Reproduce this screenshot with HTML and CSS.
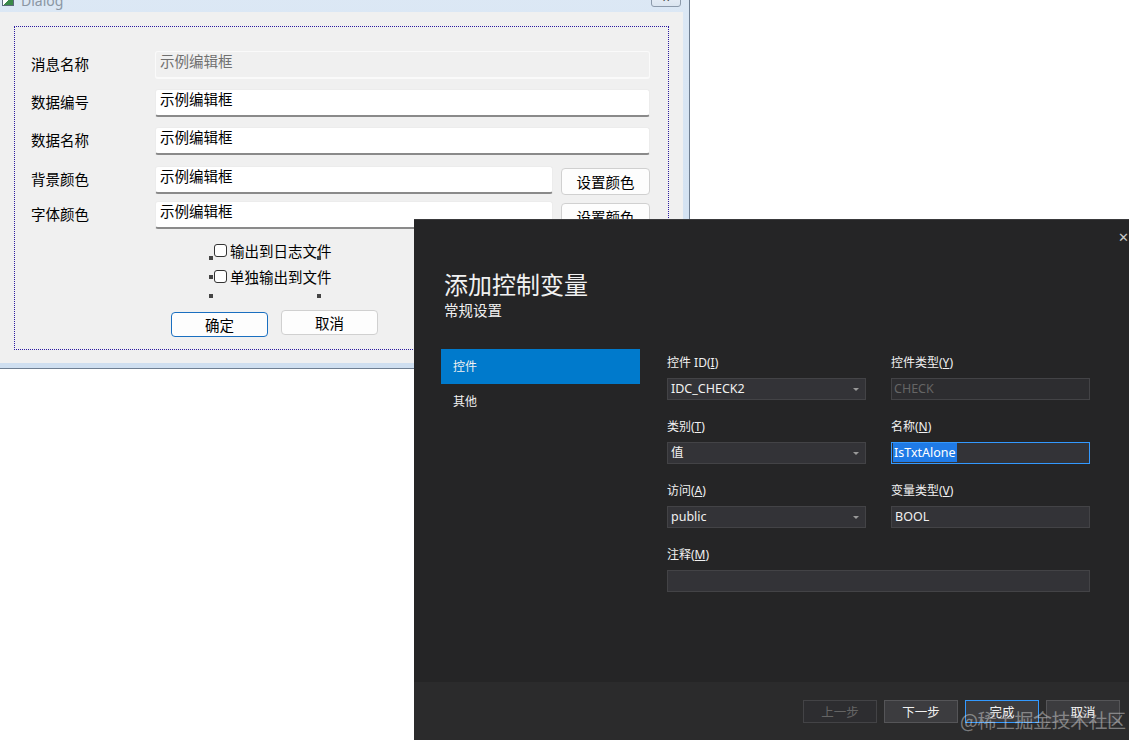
FILE: index.html
```html
<!DOCTYPE html>
<html lang="zh-CN">
<head>
  <meta charset="UTF-8">
  <title>添加控制变量</title>
  <link rel="stylesheet" href="styles.css">
</head>
<body>
  <!-- MFC resource editor dialog -->
  <div class="dlg">
    <div class="dlg-title">
      <span class="dlg-icon"></span>
      <span class="dlg-caption">Dialog</span>
      <span class="dlg-close">✕</span>
    </div>
    <div class="dlg-client">
      <div class="guide">
        <div class="form">
          <div class="row">
            <span class="lbl">消息名称</span>
            <div class="edit disabled">示例编辑框</div>
          </div>
          <div class="row">
            <span class="lbl">数据编号</span>
            <div class="edit">示例编辑框</div>
          </div>
          <div class="row">
            <span class="lbl">数据名称</span>
            <div class="edit">示例编辑框</div>
          </div>
          <div class="row row-4">
            <span class="lbl">背景颜色</span>
            <div class="edit">示例编辑框</div>
            <button class="btn btn-color">设置颜色</button>
          </div>
          <div class="row row-5">
            <span class="lbl">字体颜色</span>
            <div class="edit">示例编辑框</div>
            <button class="btn btn-color">设置颜色</button>
          </div>
        </div>

        <div class="checks">
          <label class="chk"><span class="box"></span>输出到日志文件</label>
          <label class="chk"><span class="box"></span>单独输出到文件</label>
          <span class="handle h1"></span>
          <span class="handle h2"></span>
          <span class="handle h3"></span>
          <span class="handle h4"></span>
          <span class="handle h5"></span>
        </div>

        <div class="actions">
          <button class="btn btn-ok">确定</button>
          <button class="btn btn-cancel">取消</button>
        </div>
      </div>
    </div>
  </div>

  <!-- Visual Studio "add member variable" wizard -->
  <div class="wizard">
    <span class="wz-close">✕</span>
    <div class="wz-head">
      <h1>添加控制变量</h1>
      <p>常规设置</p>
    </div>
    <div class="wz-body">
      <ul class="nav">
        <li class="active">控件</li>
        <li>其他</li>
      </ul>
      <div class="fields">
        <div class="field">
          <span class="flbl">控件 ID(<u>I</u>)</span>
          <div class="input combo">IDC_CHECK2</div>
        </div>
        <div class="field">
          <span class="flbl">控件类型(<u>Y</u>)</span>
          <div class="input readonly">CHECK</div>
        </div>
        <div class="field">
          <span class="flbl">类别(<u>T</u>)</span>
          <div class="input combo">值</div>
        </div>
        <div class="field">
          <span class="flbl">名称(<u>N</u>)</span>
          <div class="input focus"><span class="sel">IsTxtAlone</span></div>
        </div>
        <div class="field">
          <span class="flbl">访问(<u>A</u>)</span>
          <div class="input combo">public</div>
        </div>
        <div class="field">
          <span class="flbl">变量类型(<u>V</u>)</span>
          <div class="input">BOOL</div>
        </div>
        <div class="field wide">
          <span class="flbl">注释(<u>M</u>)</span>
          <div class="input"></div>
        </div>
      </div>
    </div>
    <div class="wz-foot">
      <button class="wbtn off">上一步</button>
      <button class="wbtn">下一步</button>
      <button class="wbtn primary">完成</button>
      <button class="wbtn">取消</button>
    </div>
  </div>

  <span class="watermark">@稀土掘金技术社区</span>
</body>
</html>
```

FILE: styles.css
```css
body {
  margin: 0;
  width: 1129px;
  height: 740px;
  background: #fff;
  font-family: "Noto Sans", "Noto Sans CJK SC", sans-serif;
  position: relative;
  overflow: hidden;
}

/* ---------- left dialog (resource editor) ---------- */
.dlg {
  position: absolute;
  left: -7px;
  top: -14px;
  width: 697px;
  height: 383px;
  box-sizing: border-box;
  border: 1px solid #6f7f92;
  background: linear-gradient(#dce8f5, #cfdff0);
  display: flex;
  flex-direction: column;
}

.dlg-title {
  height: 25px;
  display: flex;
  align-items: center;
  padding-left: 8px;
  position: relative;
}

.dlg-icon {
  width: 10px;
  height: 9px;
  border: 1px solid #5a6a7a;
  background: linear-gradient(135deg, #fff 50%, #3a8a4a 50%);
  margin-top: 2px;
}

.dlg-caption {
  font-size: 14px;
  color: #8a96a3;
  margin-left: 7px;
  margin-top: 1px;
}

.dlg-close {
  position: absolute;
  right: 8px;
  top: 0;
  width: 30px;
  height: 20px;
  box-sizing: border-box;
  border: 1px solid #8c9aab;
  border-radius: 0 0 3px 3px;
  background: linear-gradient(#f2f6fb, #dbe5f0);
  font-size: 10px;
  color: #444;
  text-align: center;
  line-height: 20px;
}

.dlg-client {
  flex: 1;
  margin: 0 6px 5px 6px;
  background: #f0f0f0;
  padding: 14px 14px 13px 14px;
  display: flex;
}

.guide {
  flex: 1;
  border: 1px dotted #2a1aa0;
  padding: 24px 18px 0 16px;
}

.form {
  display: flex;
  flex-direction: column;
  gap: 10px;
}

.row {
  display: flex;
  align-items: center;
  height: 28px;
}

.row-4 {
  margin-top: 1px;
}

.row-5 {
  margin-top: -3px;
}

.lbl {
  width: 124px;
  font-size: 14.5px;
  color: #000;
  margin-top: -3px;
}

.edit {
  flex: 1;
  height: 28px;
  box-sizing: border-box;
  background: #fff;
  border: 1px solid #ececec;
  border-bottom: 2px solid #8a8a8a;
  border-radius: 3px;
  padding: 0 4px;
  font-size: 14.5px;
  line-height: 18px;
  color: #000;
}

.edit.disabled {
  background: #f0f0f0;
  border: 1px solid #fafafa;
  border-bottom: 2px solid #fafafa;
  color: #707070;
}

.btn {
  font-family: "Noto Sans CJK SC", sans-serif;
  font-size: 14.5px;
  color: #000;
  background: #fdfdfd;
  border: 1px solid #d0d0d0;
  border-radius: 4px;
  padding: 0;
}

.btn-color {
  width: 89px;
  height: 27px;
  margin-left: 8px;
  margin-top: 3px;
}

.checks {
  position: relative;
  margin: 8px 0 0 179px;
  padding-left: 4px;
  white-space: nowrap;
}

.chk {
  display: flex;
  align-items: center;
  height: 26px;
  font-size: 14.5px;
  color: #000;
}

.box {
  flex-shrink: 0;
  width: 13px;
  height: 13px;
  box-sizing: border-box;
  border: 1px solid #333;
  border-radius: 3px;
  background: #fff;
  margin-right: 3px;
}

.handle {
  position: absolute;
  width: 4px;
  height: 4px;
  background: #444;
}

.h1 { left: -1px; top: 19px; }
.h2 { left: 107px; top: 19px; }
.h3 { left: -1px; top: 38px; }
.h4 { left: -1px; top: 57px; }
.h5 { left: 107px; top: 57px; }

.actions {
  display: flex;
  align-items: flex-start;
  gap: 13px;
  margin: 21px 0 0 140px;
}

.btn-ok {
  width: 97px;
  height: 25px;
  margin-top: 2px;
  border-color: #1a6fc0;
}

.btn-cancel {
  width: 97px;
  height: 25px;
}

/* ---------- right wizard (dark theme) ---------- */
.wizard {
  position: absolute;
  left: 414px;
  top: 219px;
  width: 730px;
  height: 521px;
  background: #252526;
  border-top: 1px solid #3a3a3c;
  box-sizing: border-box;
  display: flex;
  flex-direction: column;
  color: #f1f1f1;
  font-family: "Noto Sans", "Noto Sans CJK SC", sans-serif;
}

.wz-close {
  position: absolute;
  left: 704px;
  top: 8px;
  font-size: 13px;
  color: #c8c8c8;
}

.wz-head {
  padding: 49px 0 0 30px;
}

.wz-head h1 {
  margin: 0;
  font-size: 24px;
  font-weight: normal;
  line-height: 32px;
}

.wz-head p {
  margin: 0;
  font-size: 14.5px;
  line-height: 18px;
}

.wz-body {
  flex: 1;
  display: flex;
  padding-top: 30px;
}

.nav {
  list-style: none;
  margin: 0 0 0 27px;
  padding: 0;
  width: 199px;
}

.nav li {
  height: 35px;
  line-height: 35px;
  padding-left: 12px;
  font-size: 12px;
}

.nav li.active {
  background: #007acc;
}

.fields {
  margin-left: 27px;
  padding-top: 5px;
  display: grid;
  grid-template-columns: 199px 199px;
  column-gap: 25px;
  row-gap: 18px;
  align-content: start;
}

.field.wide {
  grid-column: 1 / 3;
}

.flbl {
  display: block;
  font-size: 12px;
  line-height: 18px;
  margin-bottom: 6px;
}

.input {
  height: 22px;
  box-sizing: border-box;
  background: #333337;
  border: 1px solid #434346;
  font-size: 12.5px;
  line-height: 20px;
  padding-left: 3px;
  position: relative;
}

.input.combo::after {
  content: "";
  position: absolute;
  right: 6px;
  top: 9px;
  border-left: 3px solid transparent;
  border-right: 3px solid transparent;
  border-top: 3px solid #999;
}

.input.readonly {
  background: #2d2d30;
  color: #656565;
  padding-left: 2px;
}

.input.focus {
  border-color: #3399ff;
  padding-left: 1px;
}

.sel {
  background: #1f7ae6;
  color: #fff;
  padding: 1px 1px;
}

.wz-foot {
  height: 58px;
  background: #2b2b2c;
  display: flex;
  justify-content: flex-end;
  align-items: flex-start;
  gap: 7px;
  padding: 18px 24px 0 0;
  box-sizing: border-box;
}

.wbtn {
  width: 74px;
  height: 23px;
  background: #3c3c3f;
  border: 1px solid #555558;
  color: #f1f1f1;
  font-family: "Noto Sans CJK SC", sans-serif;
  font-size: 12.5px;
  padding: 0;
}

.wbtn.off {
  background: #2d2d30;
  border-color: #434346;
  color: #656565;
}

.wbtn.primary {
  border-color: #3399ff;
}

.watermark {
  position: absolute;
  left: 960px;
  top: 706px;
  font-family: "Noto Sans CJK SC", sans-serif;
  font-size: 19px;
  color: rgba(230, 230, 230, 0.45);
  letter-spacing: -0.5px;
}
```
